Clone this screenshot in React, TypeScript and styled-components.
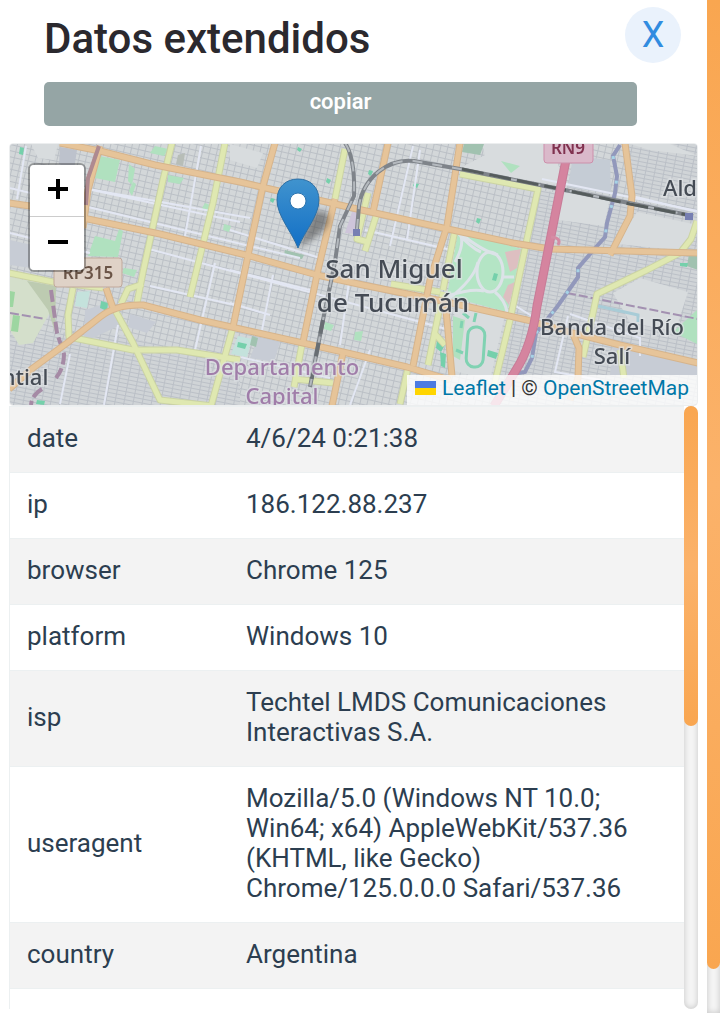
import React from "react";
import styled, { createGlobalStyle } from "styled-components";

const GlobalStyle = createGlobalStyle`
  *, *::before, *::after { box-sizing: border-box; }
  body {
    margin: 0;
    background: #fff;
    color: #2c3e50;
    font-family: Roboto, "Liberation Sans", sans-serif;
  }
`;

const Page = styled.div`
  display: flex;
  height: 100vh;
  overflow: hidden;
`;

const Dialog = styled.main`
  flex: 1;
  min-width: 0;
  display: flex;
  flex-direction: column;
  padding: 0 9px 4px;
`;

const Header = styled.header`
  display: flex;
  justify-content: space-between;
  align-items: center;
  padding: 7px 17px 0 35px;
`;

const Title = styled.h1`
  margin: 0;
  padding-top: 8px;
  font-size: 42px;
  line-height: 48px;
  font-weight: 500;
  color: #2b292e;
`;

const CloseButton = styled.button`
  width: 56px;
  height: 56px;
  padding: 0;
  border: 0;
  border-radius: 50%;
  background: #eaf2fc;
  color: #318ce0;
  font: 400 36px/56px Roboto, sans-serif;
  cursor: pointer;
`;

const CopyButton = styled.button`
  height: 44px;
  margin: 19px 61px 17px 35px;
  padding: 0 0 4px;
  border: 0;
  border-radius: 5px;
  background: #95a5a5;
  color: #fff;
  font: 600 22px/40px Roboto, sans-serif;
  cursor: pointer;
`;

const MapPanel = styled.section`
  position: relative;
  flex: none;
  height: 263px;
  border: 1px solid #eceeef;
  border-radius: 4px;
  overflow: hidden;
`;

const MapCanvas = styled.svg`
  display: block;
  width: 100%;
  height: 100%;
`;

const ZoomControl = styled.div`
  position: absolute;
  top: 19px;
  left: 18px;
  display: flex;
  flex-direction: column;
  width: 58px;
  border: 2px solid rgba(0, 0, 0, 0.3);
  border-radius: 6px;
  background-clip: padding-box;
`;

const ZoomButton = styled.button`
  display: grid;
  place-items: center;
  height: 53px;
  padding: 0 0 4px 2px;
  border: 0;
  background: #fff;
  &:first-child {
    height: 52px;
    border-bottom: 1px solid #ccc;
    border-radius: 4px 4px 0 0;
  }
  &:last-child { border-radius: 0 0 4px 4px; }
`;

const Attribution = styled.div`
  position: absolute;
  right: 0;
  bottom: 0;
  display: flex;
  align-items: center;
  gap: 6px;
  height: 30px;
  padding: 0 8px 4px 8px;
  background: rgba(255, 255, 255, 0.8);
  color: #333;
  font-size: 21px;
  line-height: 26px;
  white-space: nowrap;
`;

const MapLink = styled.a`
  color: #0078a8;
  text-decoration: none;
`;

const DataPanel = styled.section`
  flex: 1;
  min-height: 0;
  display: flex;
`;

const DataViewport = styled.div`
  flex: 1;
  min-width: 0;
  overflow: auto;
  scrollbar-width: none;
  border-left: 1px solid #ecf0f1;
`;

const DataTable = styled.table`
  width: 100%;
  border-top: 1px solid #ecf0f1;
  border-collapse: separate;
  border-spacing: 0;
  table-layout: fixed;
  font-size: 26px;
  line-height: 30px;
`;

const Row = styled.tr`
  &:nth-child(odd) { background: #f3f3f3; }
`;

const Key = styled.th`
  width: 219px;
  padding: 16px 17px 19px;
  border-bottom: 1px solid #ecf0f1;
  text-align: left;
  font-weight: 400;
`;

const Value = styled.td`
  padding: 16px 17px 19px;
  border-bottom: 1px solid #ecf0f1;
`;

const Track = styled.div<{ $size: number; $round?: boolean }>`
  flex: none;
  width: ${(p) => p.$size}px;
  border-radius: ${(p) => (p.$round ? 7 : 0)}px;
  background: #f5f5f5;
  box-shadow: inset 0 0 6px rgba(0, 0, 0, 0.2);
`;

const Thumb = styled.div<{ $length: number; $open?: boolean }>`
  height: ${(p) => p.$length}%;
  border-radius: ${(p) => (p.$open ? "0 0 7px 7px" : "7px")};
  background: linear-gradient(#f9a650, #fbb26a 50%, #f9a650);
`;

const highways = [
  "M60 143L100 151L155 165L240 182L270 189L357 209L443 228L513 243L550 249L698 253",
  "M9 203L30 206L83 218L160 234L250 256L317 275L363 285L447 302L527 320L573 333L620 345L698 363",
  "M9 389L33 368L67 343L100 317Q116 304 143 305L200 320L303 343L343 352L407 367L450 380",
  "M100 146L88 190L83 228",
  "M106 288L113 308",
  "M275 143L263 186L250 246L233 327",
  "M335 199L318 270L303 342",
  "M388 143L373 212",
  "M460 143L447 226L430 280L413 366",
  "M445 302L447 320L452 376",
  "M343 353L332 406",
  "M625 143L632 196L630 216L610 255",
  "M573 334L579 348L578 378L570 400",
];

const avenues = [
  "M172 143L163 180L143 272L137 303",
  "M225 143L213 203L190 297",
  "M345 149L335 199",
  "M368 193L357 239L368 242",
  "M377 213L365 251",
  "M460 174L538 189L527 239L510 320L493 390",
  "M697 221L691 239L680 253L647 270L597 294L593 313L583 357",
  "M9 273L53 282L103 288",
  "M73 288L68 315L69 337L133 350L177 350L240 360",
  "M115 310L133 343L160 400L213 406",
  "M143 284L128 289L121 304",
  "M233 327L223 363L211 406",
  "M302 344L294 387",
  "M455 230L447 270L443 290",
  "M443 292L428 365M408 368L400 404",
  "M391 284L440 292M435 334L445 345",
  "M294 379L333 383",
  "M620 350L624 378",
];

const streets = [
  "M10 188L150 222L300 258M83 188L250 218M92 190L240 222",
  "M10 233L90 253M145 248L250 276L450 330M150 286L235 305",
  "M201 146L185 236M26 146L17 199M215 263L195 350",
  "M118 325L104 405M70 354L60 404M240 357L330 378",
  "M230 230L320 258M365 230L460 252M413 146L390 246M420 150L407 240",
  "M273 275L262 330M350 275L340 345M370 350L350 405M542 179L697 211",
  "M632 196L698 212M568 316L555 372L600 380M230 303L270 315",
  "M490 290L535 318M570 314L640 338L640 356M230 270L310 290",
];

const greens = [
  "M99 156L120 160L115 182L95 178Z",
  "M155 146L168 149L164 156L150 153Z",
  "M168 175L184 178L180 184L168 182Z",
  "M95 236L115 241L119 229L123 231L118 257L88 256Z",
  "M129 164L135 169L132 185L128 181Z",
  "M133 182L136 184L132 196L129 191Z",
  "M325 322L334 325L331 331L324 329Z",
  "M355 332L363 331L361 341L354 340Z",
  "M501 161L520 166L511 173Z",
  "M124 268L137 270L134 277L122 273Z",
  "M205 203L210 205L207 212L202 208Z",
  "M697 310V344L673 332Z",
  "M453 316L465 320L460 360L453 356Z",
  "M224 224L231 226L229 232L223 230Z",
];

const railways = [
  "M345 143C351 152 355 168 354 196L340 226L335 262L323 320L310 387",
  "M357 229L359 206C363 178 388 158 414 161L460 169L560 189L693 216",
];

function MapDrawing() {
  return (
    <MapCanvas
      viewBox="10 144 687 261"
      preserveAspectRatio="xMidYMid slice"
      role="img"
      aria-label="San Miguel de Tucumán"
    >
      <defs>
        <pattern id="blocks" width="7" height="6" patternUnits="userSpaceOnUse" patternTransform="rotate(13)">
          <rect width="7" height="6" fill="#bbc0c6" />
          <rect x="1" y="1" width="6" height="5" fill="#d3d7d9" />
        </pattern>
        <pattern id="dense" width="9" height="4" patternUnits="userSpaceOnUse" patternTransform="rotate(11)">
          <rect width="9" height="4" fill="#bbc0c7" />
          <rect x="1" y="1" width="8" height="3" fill="#d0d4d7" />
        </pattern>
        <linearGradient id="pin" x1="0" y1="0" x2="0" y2="1">
          <stop offset="0" stopColor="#4093ce" />
          <stop offset="1" stopColor="#126fc6" />
        </linearGradient>
        <filter id="tile" filterUnits="userSpaceOnUse" x="0" y="134" width="710" height="282">
          <feGaussianBlur stdDeviation="0.6" />
        </filter>
        <filter id="soft" x="-50%" y="-50%" width="200%" height="200%">
          <feGaussianBlur stdDeviation="3" />
        </filter>
      </defs>

      <g filter="url(#tile)">
        <rect x="0" y="134" width="710" height="282" fill="url(#blocks)" />
        <path d="M10 336L100 330L240 365L240 406H10ZM538 190L698 210V406H490ZM625 144H698V210L632 200Z" fill="url(#dense)" />
        <g fill="#d8dcde">
          <path d="M31 144L58 144L54 160L38 158ZM230 144L263 153L257 168L230 160Z" />
          <path d="M482 144L550 144L567 187L460 168L485 155Z" />
          <path d="M562 192L610 198L604 226L558 220ZM637 212L698 225L678 250L617 244Z" />
          <path d="M613 293L640 278L688 292L675 332L630 322ZM630 144H670L698 156L650 150Z" />
          <path d="M455 305L505 315L490 380L450 370Z" />
        </g>
        <path d="M573 156L610 160L611 194L568 187Z" fill="#c5ccd5" />
        <path d="M85 310L110 302L121 325L84 342ZM10 240L85 257L82 275L10 265ZM258 337L280 342L274 362L250 358ZM130 314L156 322L147 333L128 327ZM613 345L698 363V375H610Z" fill="#c7ccd5" />
        <path d="M60 147L77 150L74 170L59 164Z" fill="#bdc2cc" />
        <path d="M10 277L44 284L54 305L33 343L19 345L10 330Z" fill="#d4dfcb" />
        <path d="M27 281L56 286L55 332L48 310Z" fill="#bdcbb1" />
        <path d="M10 291L15 292L13 307H10ZM13 315L20 316L18 332L11 331Z" fill="#9dd6a1" />
        <path d="M77 292L90 291L87 308L75 306ZM238 336L252 339L247 357L231 354Z" fill="#c4e2dc" />
        <path d="M464 144L484 144L480 155L462 152ZM689 254L698 256V270L687 266ZM285 250L304 255L302 259L284 255ZM252 336L258 338L256 347L250 345Z" fill="#a1c2b0" />
        <path d="M178 155L185 153L183 166L176 164Z" fill="#b7bdb7" />
        <path d="M352 212L360 209L357 234L345 233Z" fill="#cec5da" />
        <g fill="#b0e1bf">{greens.map((d) => <path key={d} d={d} />)}</g>
        <g fill="#75d0ab">
          <path d="M20 147L24 148L23 155L19 154ZM298 147L302 149L300 152L297 150ZM327 178L331 180L329 184L326 182ZM369 170L373 171L371 176L368 174ZM414 183L419 184L417 188L413 186ZM101 301L108 303L107 311L100 308ZM477 218L481 219L479 224L476 222ZM37 400L45 401L44 405L36 404ZM437 340L445 345L441 352L436 348Z" />
          <path d="M488 350L498 353L496 359L487 356ZM680 263L688 263L687 267L680 266ZM271 198L275 199L273 203L270 201ZM238 342L247 344L245 349L237 347ZM440 352L446 354L445 368L441 366Z" />
        </g>

        <g fill="none" stroke="#e3e7f3" strokeWidth="2">
          {streets.map((d) => <path key={d} d={d} />)}
        </g>
        <path d="M458 232L522 249L507 312L447 296Z" fill="#b4e5c5" />
        <path d="M505 252L521 249L517 268L510 272ZM508 285L515 282L509 305L503 297Z" fill="#ddbfc1" />
        <g fill="none" stroke="#dce3e8" strokeWidth="3">
          <ellipse cx="490" cy="272" rx="13" ry="20" />
          <path d="M458 233Q471 248 481 252M461 236Q464 246 455 262M498 255Q482 251 460 233" />
          <path d="M478 262Q474 280 447 300M447 296Q472 288 484 291M495 292Q505 300 507 312M503 277L514 277" />
        </g>
        <path d="M494 273L498 274L496 281L492 280Z" fill="#75d0ab" />
        <g fill="none" stroke="#80d2b2" strokeWidth="3">
          <rect x="467" y="327" width="17" height="40" rx="8" transform="rotate(4 475 347)" />
          <path d="M463 313L469 318M476 313L474 322M462 321L461 328M456 350L463 353" />
        </g>

        <path d="M51 290L57 333L64 354Q64 368 56 378M42 389Q32 395 31 405" fill="none" stroke="#a58aa5" strokeWidth="4" strokeDasharray="12 4" />
        <path d="M10 313L45 319M567 293L698 319" fill="none" stroke="#a391b1" strokeWidth="2" strokeDasharray="9 3" />
        <path d="M598 306L638 315V322" fill="none" stroke="#a8ccd7" strokeWidth="3" />
        <path d="M620 145L613 156L617 176L615 193L607 223L605 237L597 246L578 268L578 277L557 307L536 333L532 358L525 372L512 374" fill="none" stroke="#9298bb" strokeWidth="4" />
        <path d="M613 156L617 176L615 193L607 223L605 237L597 246L578 268L578 277L557 307L536 333L532 358" fill="none" stroke="#a6d3e6" strokeWidth="3" strokeDasharray="3 22" />

        <g fill="none" strokeLinejoin="round">
          <g stroke="#cbd3a4" strokeWidth="7">{avenues.map((d) => <path key={d} d={d} />)}</g>
          <g stroke="#dfe8b1" strokeWidth="5">{avenues.map((d) => <path key={d} d={d} />)}</g>
          <g stroke="#d6b48c" strokeWidth="7">{highways.map((d) => <path key={d} d={d} />)}</g>
          <g stroke="#e6c499" strokeWidth="5">{highways.map((d) => <path key={d} d={d} />)}</g>
          <path d="M99 146L88 178L86 205" stroke="#ae8a90" strokeWidth="4" />
          <g stroke="#7f848a" strokeWidth="4">{railways.map((d) => <path key={d} d={d} />)}</g>
          <g stroke="#b4b9be" strokeWidth="2" strokeDasharray="10 10">
            {railways.map((d) => <path key={d} d={d} />)}
          </g>
          <path d="M462 169L560 189L630 204L693 216" stroke="#555b5c" strokeWidth="3" strokeDasharray="22 6" />
          <path d="M323 320L310 387" stroke="#686e73" strokeWidth="4" strokeDasharray="14 9" />
          <path d="M566 160L543 276L537 306Q532 345 516 370L494 406" stroke="#c77b97" strokeWidth="9" />
          <path d="M566 160L543 276L537 306Q532 345 516 370L494 406" stroke="#d5849f" strokeWidth="7" />
          <path d="M551 237Q562 238 558 245" stroke="#d48ca4" strokeWidth="3" />
        </g>
        <path d="M353 229H360V236H353ZM685 213H693V220H685Z" fill="#777fb2" />

        <g stroke="#c1a99b" strokeWidth="1" fill="#dfd2c7">
          <rect x="54" y="258" width="68" height="29" rx="3" />
          <rect x="544" y="134" width="49" height="29" rx="3" fill="#dab9ca" stroke="#cd8fab" />
        </g>
        <g fontFamily='"Noto Sans", sans-serif' fontWeight="500" textAnchor="middle" stroke="#dfe3e5" strokeOpacity="0.7" strokeWidth="3" paintOrder="stroke" fill="#454c54" fontSize="26">
          <text x="394" y="278">San Miguel</text>
          <text x="393" y="312">de Tucumán</text>
          <g fontSize="22">
            <text x="612" y="335">Banda del Río</text>
            <text x="612" y="364">Salí</text>
            <text x="680" y="196">Ald</text>
            <text x="25" y="385">ntial</text>
          </g>
          <g fill="#a07da9" fontSize="22">
            <text x="282" y="375">Departamento</text>
            <text x="282" y="404">Capital</text>
          </g>
        </g>
        <g fontFamily='"Noto Sans", sans-serif' fontWeight="600" fontSize="17" textAnchor="middle">
          <text x="88" y="279" fill="#6b5447">RP315</text>
          <text x="568" y="154" fill="#80314f">RN9</text>
        </g>
      </g>

      <path d="M298 248L312 214Q328 205 329 220Q328 232 298 248" fill="#333" opacity="0.5" filter="url(#soft)" />
      <path d="M298 248C292 232 277 216 277 200C277 187 286 179 298 179S319 187 319 200C319 216 304 232 298 248Z" fill="url(#pin)" stroke="#2f70a5" strokeWidth="1" />
      <circle cx="298" cy="201" r="8" fill="#fff" stroke="#2e74ad" strokeWidth="1" />
    </MapCanvas>
  );
}

const records = [
  ["date", "4/6/24 0:21:38"],
  ["ip", "186.122.88.237"],
  ["browser", "Chrome 125"],
  ["platform", "Windows 10"],
  ["isp", "Techtel LMDS Comunicaciones Interactivas S.A."],
  ["useragent", "Mozilla/5.0 (Windows NT 10.0; Win64; x64) AppleWebKit/537.36 (KHTML, like Gecko) Chrome/125.0.0.0 Safari/537.36"],
  ["country", "Argentina"],
];

export default function App() {
  return (
    <Page>
      <GlobalStyle />
      <Dialog>
        <Header>
          <Title>Datos extendidos</Title>
          <CloseButton type="button">X</CloseButton>
        </Header>
        <CopyButton type="button">copiar</CopyButton>
        <MapPanel>
          <MapDrawing />
          <ZoomControl>
            <ZoomButton type="button" aria-label="Zoom in">
              <svg width="20" height="20" aria-hidden="true">
                <path d="M0 10H20M10 0V20" stroke="#000" strokeWidth="4" />
              </svg>
            </ZoomButton>
            <ZoomButton type="button" aria-label="Zoom out">
              <svg width="20" height="20" aria-hidden="true">
                <path d="M0 10H20" stroke="#000" strokeWidth="4" />
              </svg>
            </ZoomButton>
          </ZoomControl>
          <Attribution>
            <svg width="21" height="14" aria-hidden="true">
              <rect width="21" height="7" fill="#4c7be1" />
              <rect y="7" width="21" height="7" fill="#ffd500" />
            </svg>
            <span>
              <MapLink href="#leaflet">Leaflet</MapLink> | ©{" "}
              <MapLink href="#openstreetmap">OpenStreetMap</MapLink>
            </span>
          </Attribution>
        </MapPanel>
        <DataPanel>
          <DataViewport>
            <DataTable>
              <tbody>
                {records.map(([name, value]) => (
                  <Row key={name}>
                    <Key scope="row">{name}</Key>
                    <Value>{value}</Value>
                  </Row>
                ))}
              </tbody>
            </DataTable>
          </DataViewport>
          <Track $size={14} $round>
            <Thumb $length={53} />
          </Track>
        </DataPanel>
      </Dialog>
      <Track $size={13}>
        <Thumb $length={95.7} $open />
      </Track>
    </Page>
  );
}
